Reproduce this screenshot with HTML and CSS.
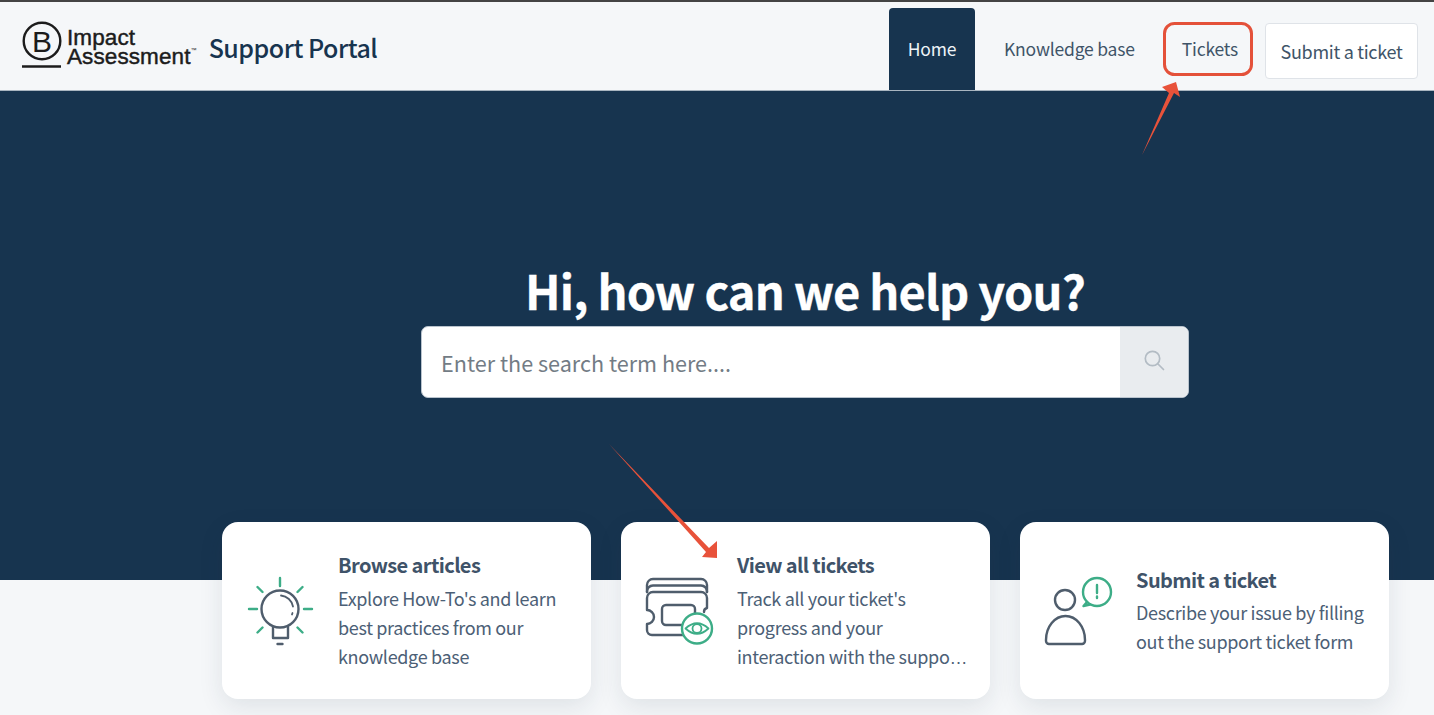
FILE: index.html
```html
<!DOCTYPE html>
<html lang="en">
<head>
<meta charset="utf-8">
<title>Support Portal</title>
<link rel="stylesheet" href="styles.css">
</head>
<body>
<div class="page">
  <header class="topbar">
    <div class="brand">
      <div class="logo">
        <svg class="logo-mark" viewBox="0 0 42 50" width="42" height="50" aria-hidden="true">
          <circle cx="21" cy="20" r="18.3" fill="none" stroke="#1c1c1c" stroke-width="2.4"/>
          <text x="21" y="30.700" text-anchor="middle" class="logo-b">B</text>
          <line x1="1" y1="45.5" x2="40" y2="45.5" stroke="#1c1c1c" stroke-width="2.6"/>
        </svg>
        <div class="logo-words"><span>Impact</span><span>Assessment<sup class="tm">™</sup></span></div>
      </div>
      <span class="portal">Support Portal</span>
    </div>
    <nav class="nav">
      <a class="tab tab-active">Home</a>
      <a class="tab tab-kb">Knowledge base</a>
      <a class="tab tab-tickets">Tickets</a>
      <a class="submit">Submit a ticket</a>
    </nav>
  </header>

  <section class="hero">
    <h1 class="title">Hi, how can we help you?</h1>
    <div class="search">
      <div class="search-input">Enter the search term here....</div>
      <div class="search-btn">
        <svg viewBox="0 0 22 22" width="22" height="22" aria-hidden="true"><circle cx="9.5" cy="9.5" r="7.2" fill="none" stroke="#b3bcc4" stroke-width="1.7"/><line x1="15" y1="15" x2="20.5" y2="20.5" stroke="#b3bcc4" stroke-width="1.7" stroke-linecap="round"/></svg>
      </div>
    </div>
  </section>

  <section class="cards">
    <article class="card">
      <svg class="icon" viewBox="246 575 70 72" aria-hidden="true">
        <g class="green">
          <path d="M280 578v8M249 609h8M304 609h8M257.500 587l5 5M302.500 587l-5 5M257.500 632.500l5-5M302.500 632.500l-5-5"/>
        </g>
        <g class="gray">
          <circle cx="280" cy="609" r="18.500"/>
          <path d="M273 627v11h15v-11"/>
          <path d="M277.500 644h5"/>
          <path class="thin" d="M281 595.500a13.500 13.500 0 0 1 12 11M292.500 613l-.5 1.500"/>
        </g>
      </svg>
      <div class="body">
        <h2 class="card-title">Browse articles</h2>
        <p class="card-text">Explore How-To's and learn best practices from our knowledge base</p>
      </div>
    </article>
    <article class="card">
      <svg class="icon" viewBox="645 575 70 72" aria-hidden="true">
        <g class="gray">
          <path d="M647 592v-7a6 6 0 0 1 6-6h48a6 6 0 0 1 6 6v7"/>
          <path d="M647 592a6 6 0 0 1 6-6.500h48a6 6 0 0 1 6 6.500"/>
          <path d="M653 592h48a6 6 0 0 1 6 6v10a4 4 0 0 0-3 4M653 592a6 6 0 0 0-6 6v12a7 7 0 0 1 0 14v6a5 5 0 0 0 5 5h32"/>
          <rect x="662" y="605" width="33" height="20" rx="4"/>
        </g>
        <circle cx="697" cy="628.500" r="15" class="badge"/>
        <g class="green">
          <path class="thin" d="M685.500 628.500q11.500-10.500 23 0q-11.500 10.500-23 0z"/>
          <circle class="thin" cx="697" cy="628.500" r="4.500"/>
        </g>
      </svg>
      <div class="body">
        <h2 class="card-title">View all tickets</h2>
        <p class="card-text">Track all your ticket's progress and your interaction with the suppo<span class="ellipsis">…</span></p>
      </div>
    </article>
    <article class="card">
      <svg class="icon" viewBox="1044 575 70 72" aria-hidden="true">
        <g class="gray">
          <circle cx="1065" cy="600" r="10"/>
          <path d="M1046 640a19.500 24 0 0 1 39 0v1a3 3 0 0 1-3 3h-33a3 3 0 0 1-3-3z"/>
        </g>
        <g class="green">
          <circle cx="1097" cy="592" r="14"/>
          <path d="M1087 602l-3.500 4 6.500-1.500"/>
          <path d="M1097 585v8M1097 596.500v1.500"/>
        </g>
      </svg>
      <div class="body">
        <h2 class="card-title">Submit a ticket</h2>
        <p class="card-text">Describe your issue by filling out the support ticket form</p>
      </div>
    </article>
  </section>

  <svg class="marks" viewBox="0 0 1434 715" width="1434" height="715" aria-hidden="true">
    <rect x="1164.500" y="23.500" width="87" height="51" rx="10" class="mark-box"/>
    <polygon class="mark-arrow" points="1142,155 1169,93 1162,87 1176,82 1180,97 1174,93"/>
    <polygon class="mark-arrow" points="609,444 709,548 717,541 717,558 702,557 706,552"/>
  </svg>
</div>
</body>
</html>
```

FILE: styles.css
```css
* { box-sizing: border-box; }
html, body { margin: 0; height: 100%; }
body {
  background: #f5f7f9;
  font-family: "Noto Sans CJK SC", "Noto Sans", sans-serif;
  overflow: hidden;
}
.page {
  position: relative;
  width: 1434px;
  height: 715px;
  overflow: hidden;
  border-top: 2px solid #444;
}
.topbar {
  height: 89px;
  display: flex;
  justify-content: space-between;
  align-items: stretch;
  background: #f5f7f9;
  border-bottom: 1px solid #a9b5c0;
  padding: 0 16px 0 21px;
}
.brand {
  display: flex;
  align-items: center;
  gap: 12px;
}
.logo { display: flex; align-items: center; gap: 4px; }
.logo-mark { display: block; margin-top: -1px; }
.logo-b {
  font-family: "Liberation Sans", sans-serif;
  font-size: 30px;
  fill: #1c1c1c;
}
.logo-words {
  display: flex;
  flex-direction: column;
  font-family: "Liberation Sans", sans-serif;
  font-size: 22.500px;
  line-height: 19.500px;
  color: #1c1c1c;
  -webkit-text-stroke: .45px #1c1c1c;
  letter-spacing: .1px;
  margin-top: 2px;
}
.tm { font-size: 6px; line-height: 0; vertical-align: 12px; -webkit-text-stroke: 0; }
.portal {
  font-size: 25px;
  font-weight: 500;
  color: #17344f;
  line-height: 32px;
  letter-spacing: -.5px;
  margin-top: 2px;
}
.nav { display: flex; align-items: stretch; padding-top: 6px; }
.tab {
  display: flex;
  align-items: center;
  padding-bottom: 2px;
  font-size: 17.500px;
  letter-spacing: -.2px;
  color: #3f5468;
  border-radius: 4px 4px 0 0;
}
.tab-active {
  width: 86px;
  justify-content: center;
  background: #17344f;
  color: #eef3f7;
}
.tab-kb { margin-left: 29px; }
.tab-tickets { margin-left: 47px; }
.submit {
  margin: 15px 0 11px 27px;
  width: 153px;
  display: flex;
  align-items: center;
  justify-content: center;
  background: #fff;
  border: 1px solid #dfe3e8;
  border-radius: 4px;
  font-size: 18px;
  letter-spacing: -.3px;
  color: #3f5468;
}
.hero {
  height: 489px;
  background: #17344f;
  display: flex;
  flex-direction: column;
  align-items: center;
  padding: 166px 0 0 176px;
}
.title {
  margin: 0;
  font-size: 47px;
  line-height: 66px;
  font-weight: 700;
  letter-spacing: -.85px;
  -webkit-text-stroke: .3px #fff;
  color: #fff;
}
.search {
  width: 768px;
  height: 72px;
  display: flex;
  margin-top: 3px;
  background: #fff;
  border: 1px solid #b9c3cd;
  border-radius: 7px;
  overflow: hidden;
}
.search-input {
  flex: 1;
  display: flex;
  align-items: center;
  padding-left: 19px;
  font-size: 21.600px;
  color: #737c85;
}
.search-btn {
  width: 68px;
  display: flex;
  align-items: center;
  justify-content: center;
  padding-bottom: 5px;
  background: #e9ecef;
}
.cards {
  display: flex;
  gap: 30px;
  margin: -58px 0 0 222px;
  position: relative;
}
.card {
  width: 369px;
  height: 177px;
  display: flex;
  align-items: center;
  gap: 22px;
  padding: 0 20px 0 24px;
  background: #fff;
  border-radius: 16px;
  box-shadow: 0 8px 24px rgba(30, 50, 70, .1);
}
.icon { width: 70px; height: 72px; flex: none; display: block; }
.icon path, .icon circle, .icon rect { fill: none; stroke-width: 2.400; stroke-linecap: round; stroke-linejoin: round; }
.gray { stroke: #4f5d6c; }
.green { stroke: #3dad87; }
.icon .thin { stroke-width: 1.800; }
.icon .badge { fill: #fff; stroke: #3dad87; stroke-width: 2.400; }
.body { min-width: 0; flex: 1; }
.card-title {
  margin: 0;
  font-size: 20px;
  letter-spacing: -.6px;
  line-height: 29px;
  font-weight: 700;
  color: #3f5369;
}
.card-text {
  margin: 4.500px 0 0;
  font-size: 18px;
  letter-spacing: -.33px;
  line-height: 29px;
  color: #4c6076;
}
.ellipsis { font-family: "Liberation Sans", sans-serif; line-height: 0; }
.marks { position: absolute; left: 0; top: -2px; pointer-events: none; }
.mark-box { fill: none; stroke: #e4513a; stroke-width: 3; }
.mark-arrow { fill: #e8523a; }
```
